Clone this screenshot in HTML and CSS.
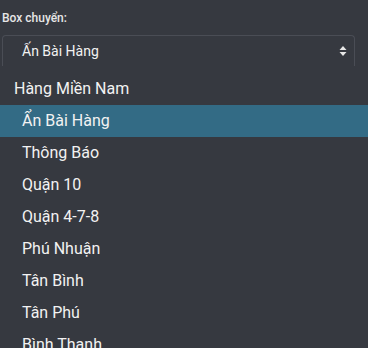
FILE: index.html
```html
<!DOCTYPE html>
<html>
<head>
<meta charset="utf-8">
<link rel="stylesheet" href="styles.css">
</head>
<body>
<div class="field">
  <label class="label">Box chuyển:</label>
  <div class="select">
    <span class="value">Ấn Bài Hàng</span>
    <svg class="arrows" width="8" height="12" viewBox="0 0 8 12"><path d="M4 1 L7.5 5 H0.5 Z M4 11 L7.5 7 H0.5 Z" fill="#e8e8e8"/></svg>
  </div>
</div>
<ul class="dropdown">
  <li class="group">Hàng Miền Nam</li>
  <li class="opt active">Ẩn Bài Hàng</li>
  <li class="opt">Thông Báo</li>
  <li class="opt">Quận 10</li>
  <li class="opt">Quận 4-7-8</li>
  <li class="opt">Phú Nhuận</li>
  <li class="opt">Tân Bình</li>
  <li class="opt">Tân Phú</li>
  <li class="opt">Bình Thạnh</li>
</ul>
</body>
</html>
```
FILE: styles.css
```css
html {
  background: #363940;
}
body {
  margin: 0;
  padding: 0;
  background: #363940;
  font-family: Roboto, "Noto Sans", sans-serif;
  color: #f2f2f2;
  height: 348px;
  overflow: hidden;
}
.field {
  padding: 10px 13px 0 2px;
}
.label {
  display: block;
  font-size: 12px;
  font-weight: 500;
  line-height: 16px;
  color: #e6e6e6;
}
.select {
  margin-top: 9px;
  height: 31px;
  border: 1px solid #4a4d55;
  border-bottom: none;
  border-radius: 4px 4px 0 0;
  display: flex;
  align-items: center;
  justify-content: space-between;
  padding: 0 7px 0 19px;
  box-sizing: border-box;
}
.value {
  font-size: 14px;
}
.dropdown {
  margin: 0;
  padding: 7px 0 0;
  list-style: none;
}
.dropdown li {
  height: 32px;
  line-height: 32px;
  font-size: 16px;
  white-space: nowrap;
}
.group {
  padding-left: 14px;
}
.opt {
  padding-left: 22px;
}
.active {
  background: #336b85;
}
```
